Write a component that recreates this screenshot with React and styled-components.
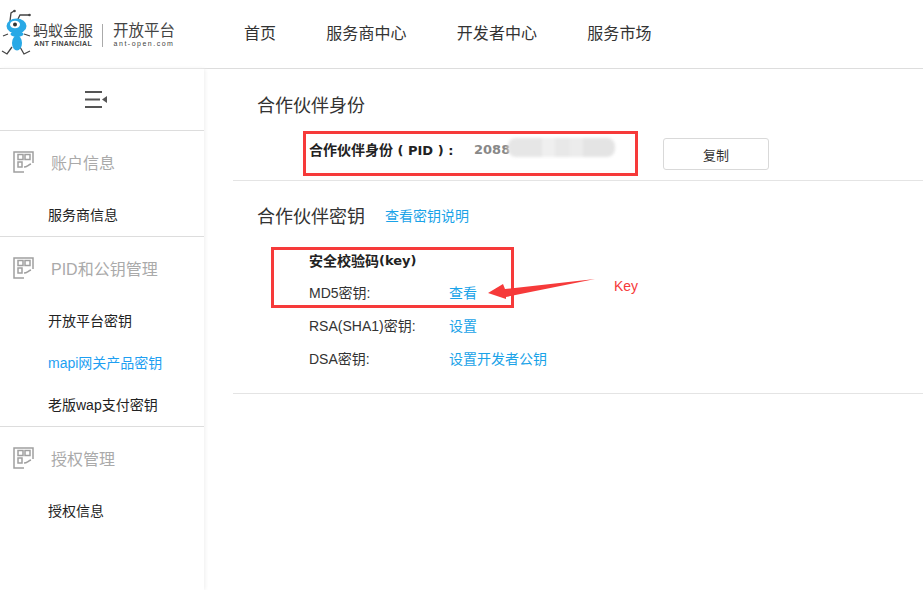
import styled, { createGlobalStyle } from 'styled-components';

const GlobalStyle = createGlobalStyle`
  html, body {
    margin: 0;
    padding: 0;
    background: #fff;
    font-family: "Liberation Sans", "Noto Sans CJK SC", sans-serif;
  }
`;

const Page = styled.div`
  position: relative;
  width: 923px;
  height: 590px;
  overflow: hidden;
`;

const Header = styled.header`
  display: flex;
  align-items: center;
  height: 68px;
  border-bottom: 1px solid #ddd;
`;

const Logo = styled.div`
  display: flex;
  align-items: center;
  width: 244px;
  box-sizing: border-box;
`;

const LogoText = styled.div`
  display: flex;
  flex-direction: column;
  align-items: center;
  margin-left: ${(p) => p.$gap || 0}px;
  margin-top: 2px;
  color: #444;
`;

const LogoTitle = styled.span`
  font-size: ${(p) => p.$size || 15}px;
  line-height: 17px;
`;

const LogoSub = styled.span`
  font-size: 7px;
  line-height: 10px;
  letter-spacing: ${(p) => p.$spacing || 0}px;
  font-weight: ${(p) => p.$weight || 400};
  white-space: nowrap;
`;

const LogoDivider = styled.span`
  width: 1px;
  height: 23px;
  margin-left: 9px;
  margin-top: 2px;
  background: #aaa;
`;

const Nav = styled.nav`
  display: flex;
  gap: 50px;
  margin-top: -5px;
`;

const NavItem = styled.a`
  font-size: 16px;
  letter-spacing: 0.1px;
  color: #333;
`;

const Body = styled.div`
  display: flex;
  height: 521px;
`;

const Sidebar = styled.aside`
  width: 204px;
  flex-shrink: 0;
  box-shadow: 1px 0 4px #eee;
`;

const Toggle = styled.div`
  display: flex;
  align-items: center;
  justify-content: center;
  height: 61px;
  padding-right: 13px;
  border-bottom: 1px solid #ddd;
`;

const Group = styled.section`
  margin-top: -1px;
  padding-bottom: 1px;
  border-bottom: ${(p) => (p.$last ? 'none' : '1px solid #ddd')};
`;

const GroupHead = styled.div`
  display: flex;
  align-items: center;
  gap: 17px;
  height: 63px;
  padding-left: 13px;
  font-size: 16px;
  color: #aaa;
`;

const SideItem = styled.div`
  display: flex;
  align-items: center;
  height: 42px;
  padding-left: 48px;
  font-size: 14px;
  color: ${(p) => (p.$active ? '#1e9ff2' : '#222')};
`;

const Main = styled.main`
  flex: 1;
  padding-left: 29px;
`;

const Section = styled.section`
  height: ${(p) => p.$height}px;
  box-sizing: border-box;
  padding-top: ${(p) => p.$top}px;
  border-bottom: 1px solid #e4e4e4;
`;

const TitleRow = styled.div`
  display: flex;
  align-items: center;
  gap: 20px;
  height: 24px;
  padding-left: 24px;
`;

const Title = styled.h2`
  margin: 0;
  font-size: 18px;
  font-weight: 400;
  color: #333;
`;

const TitleLink = styled.a`
  font-size: 14px;
  color: #1aa3e8;
`;

const PidRow = styled.div`
  display: flex;
  align-items: center;
  height: 36px;
  margin-top: 15px;
  padding-left: 76px;
`;

const PidLabel = styled.span`
  width: 165px;
  font-size: 14px;
  font-weight: 700;
  color: #222;
  white-space: pre;
`;

const BoldLatin = styled.span`
  font-family: "DejaVu Sans", sans-serif;
  font-size: 13px;
`;

const PidValue = styled.span`
  display: flex;
  align-items: center;
  width: 189px;
  font-family: "DejaVu Sans", sans-serif;
  font-size: 13px;
  font-weight: 700;
  color: #888;
`;

const Blur = styled.span`
  width: 107px;
  height: 19px;
  margin: -4px 0 0 -2px;
  border-radius: 8px;
  background: linear-gradient(90deg, #e6e6e6 0 32%, #efefef 32% 44%, #e8e8e8 44% 58%, #ececec 58% 70%, #e4e4e4 70% 100%);
  filter: blur(1.5px);
`;

const CopyButton = styled.button`
  width: 106px;
  height: 32px;
  margin-top: 10px;
  padding: 0;
  border: 1px solid #d9d9d9;
  border-radius: 3px;
  background: #fff;
  font-family: inherit;
  font-size: 13px;
  color: #333;
`;

const KeyList = styled.div`
  display: flex;
  flex-direction: column;
  margin-top: 18px;
  padding-left: 76px;
`;

const KeyRow = styled.div`
  display: flex;
  align-items: center;
  height: 33px;
  font-size: 14px;
  color: #333;
`;

const KeyHead = styled(KeyRow)`
  height: 30px;
  font-weight: 700;
  color: #222;
`;

const KeyLabel = styled.span`
  width: 140px;
`;

const KeyLink = styled.a`
  color: #1aa3e8;
`;

const RedBox = styled.div`
  position: absolute;
  left: ${(p) => p.$x}px;
  top: ${(p) => p.$y}px;
  width: ${(p) => p.$w}px;
  height: ${(p) => p.$h}px;
  box-sizing: border-box;
  border: 3px solid #f63a3a;
`;

const Arrow = styled.svg`
  position: absolute;
  left: 485px;
  top: 275px;
`;

const KeyNote = styled.span`
  position: absolute;
  left: 614px;
  top: 277px;
  font-size: 14px;
  line-height: 18px;
  color: #f63a3a;
`;

function AntLogo() {
  return (
    <svg width="32" height="60" viewBox="0 4 32 60">
      <path d="M10 21 L11 13 L14 11 M17 21 L20 15 L29 15" fill="none" stroke="#444" strokeWidth="1.3" />
      <circle cx="14.500" cy="11" r="1.300" fill="#444" />
      <circle cx="29.500" cy="15" r="1.300" fill="#444" />
      <path d="M2 51 L7 54 L12 47 M20 47 L24 54 L30 51 M8 34 L3 36 M24 34 L30 36" fill="none" stroke="#444" strokeWidth="1.300" />
      <ellipse cx="16.500" cy="26" rx="10" ry="7.500" fill="#29a9e6" />
      <ellipse cx="15" cy="24.500" rx="5" ry="3.800" fill="#fff" />
      <circle cx="15" cy="24.500" r="2" fill="#333" />
      <ellipse cx="17" cy="34" rx="6.500" ry="3" fill="#29a9e6" />
      <ellipse cx="17" cy="43" rx="5" ry="7.500" fill="#29a9e6" />
    </svg>
  );
}

function MenuIcon() {
  return (
    <svg width="24" height="19" viewBox="0 0 24 19">
      <path d="M1 2h17M1 9.500h15M1 17h17" stroke="#555" strokeWidth="2" fill="none" />
      <path d="M23 6v7l-5-3.500z" fill="#555" />
    </svg>
  );
}

function GroupIcon() {
  return (
    <svg width="21" height="22" viewBox="0 0 21 22" fill="none" stroke="#a0a0a0" strokeWidth="1.500">
      <path d="M20 12V1H1v20h10" />
      <rect x="5" y="3.500" width="5" height="5" />
      <rect x="12" y="3.500" width="5" height="5" />
      <rect x="5" y="11" width="4" height="5" />
      <path d="M11 16c3 0 4-2 7-3" />
    </svg>
  );
}

const groups = [
  { title: '账户信息', items: ['服务商信息'] },
  { title: 'PID和公钥管理', items: ['开放平台密钥', 'mapi网关产品密钥', '老版wap支付密钥'] },
  { title: '授权管理', items: ['授权信息'], last: true },
];

const keys = [
  { label: 'MD5密钥:', link: '查看' },
  { label: 'RSA(SHA1)密钥:', link: '设置' },
  { label: 'DSA密钥:', link: '设置开发者公钥' },
];

export default function App() {
  return (
    <Page>
      <GlobalStyle />
      <Header>
        <Logo>
          <AntLogo />
          <LogoText $gap={1}>
            <LogoTitle>蚂蚁金服</LogoTitle>
            <LogoSub $weight={700} $spacing={0.3}>ANT FINANCIAL</LogoSub>
          </LogoText>
          <LogoDivider />
          <LogoText $gap={10}>
            <LogoTitle $size={15.5}>开放平台</LogoTitle>
            <LogoSub $spacing={1.5}>ant-open.com</LogoSub>
          </LogoText>
        </Logo>
        <Nav>
          <NavItem>首页</NavItem>
          <NavItem>服务商中心</NavItem>
          <NavItem>开发者中心</NavItem>
          <NavItem>服务市场</NavItem>
        </Nav>
      </Header>
      <Body>
        <Sidebar>
          <Toggle><MenuIcon /></Toggle>
          {groups.map((g) => (
            <Group key={g.title} $last={g.last}>
              <GroupHead><GroupIcon />{g.title}</GroupHead>
              {g.items.map((item) => (
                <SideItem key={item} $active={item.startsWith('mapi')}>{item}</SideItem>
              ))}
            </Group>
          ))}
        </Sidebar>
        <Main>
          <Section $height={112} $top={23}>
            <TitleRow><Title>合作伙伴身份</Title></TitleRow>
            <PidRow>
              <PidLabel>合作伙伴身份<BoldLatin> ( PID ) :</BoldLatin></PidLabel>
              <PidValue>2088<Blur /></PidValue>
              <CopyButton>复制</CopyButton>
            </PidRow>
          </Section>
          <Section $height={213} $top={22}>
            <TitleRow>
              <Title>合作伙伴密钥</Title>
              <TitleLink>查看密钥说明</TitleLink>
            </TitleRow>
            <KeyList>
              <KeyHead>安全校验码<BoldLatin>(key)</BoldLatin></KeyHead>
              {keys.map((k) => (
                <KeyRow key={k.label}>
                  <KeyLabel>{k.label}</KeyLabel>
                  <KeyLink>{k.link}</KeyLink>
                </KeyRow>
              ))}
            </KeyList>
          </Section>
        </Main>
      </Body>
      <RedBox $x={303} $y={131} $w={335} $h={45} />
      <RedBox $x={271} $y={247} $w={243} $h={61} />
      <Arrow width="112" height="26" viewBox="0 0 112 26">
        <path d="M3 18L18 9l2 5 90-10-89 18 0 2z" fill="#f63a3a" />
      </Arrow>
      <KeyNote>Key</KeyNote>
    </Page>
  );
}
